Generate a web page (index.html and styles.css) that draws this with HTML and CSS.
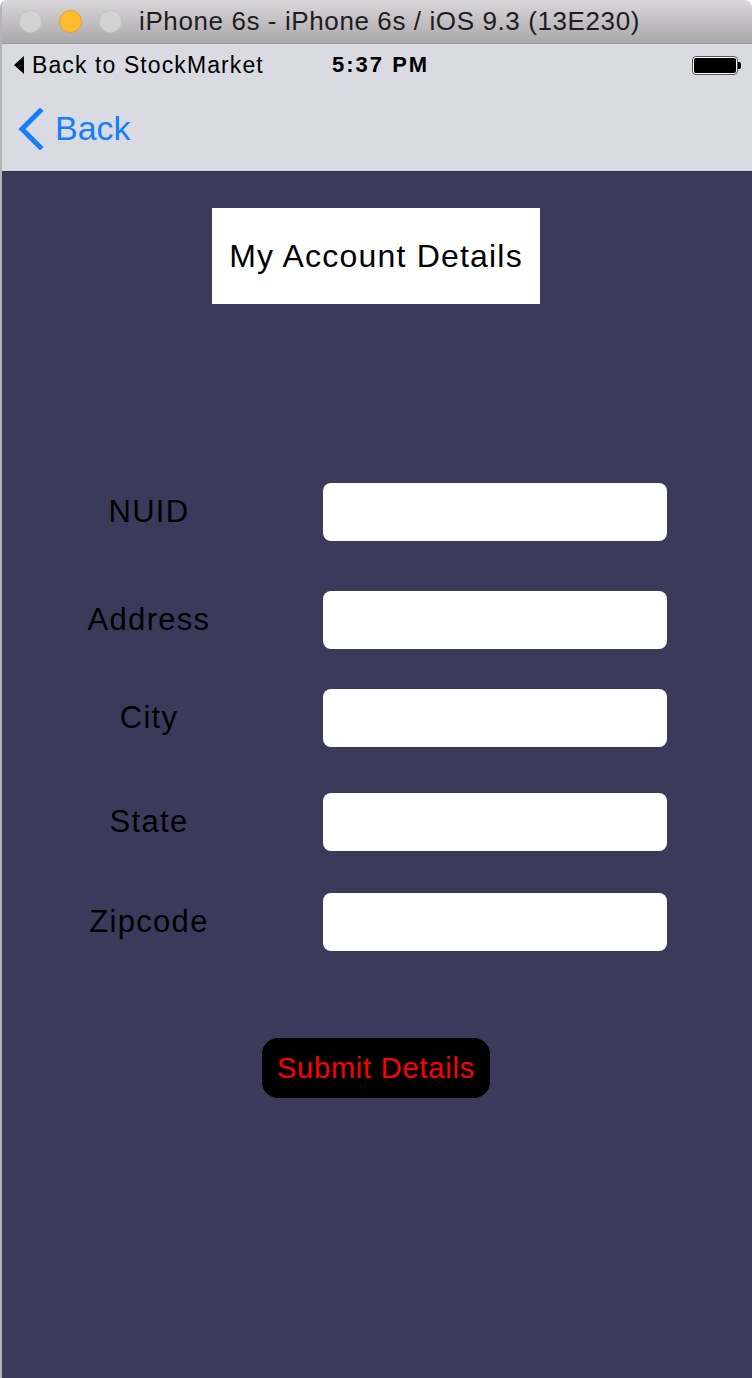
FILE: index.html
```html
<!DOCTYPE html>
<html>
<head>
<meta charset="utf-8">
<link rel="stylesheet" href="styles.css">
</head>
<body>
<div class="window">
  <div class="titlebar">
    <div class="lights">
      <span class="light gray"></span>
      <span class="light yellow"></span>
      <span class="light gray"></span>
    </div>
    <div class="title">iPhone 6s - iPhone 6s / iOS 9.3 (13E230)</div>
  </div>
  <div class="phone">
    <div class="statusbar">
      <div class="back-app">
        <svg class="tri" width="10" height="18" viewBox="0 0 10 18"><path d="M10 0 L0 9 L10 18 Z" fill="#000"/></svg>
        <span>Back to StockMarket</span>
      </div>
      <div class="time">5:37 PM</div>
      <div class="battery">
        <div class="batt-body"><div class="batt-fill"></div></div>
        <div class="batt-tip"></div>
      </div>
    </div>
    <div class="navbar">
      <svg class="chevron" width="28" height="42" viewBox="0 0 28 42"><path d="M24 3 L6 21 L24 39" fill="none" stroke="#157efb" stroke-width="5" stroke-linecap="square"/></svg>
      <span class="nav-back">Back</span>
    </div>
    <div class="content">
      <div class="heading">My Account Details</div>
      <div class="form">
        <div class="row"><div class="label">NUID</div><div class="field"></div></div>
        <div class="row"><div class="label">Address</div><div class="field"></div></div>
        <div class="row"><div class="label">City</div><div class="field"></div></div>
        <div class="row"><div class="label">State</div><div class="field"></div></div>
        <div class="row"><div class="label">Zipcode</div><div class="field"></div></div>
      </div>
      <div class="submit-wrap"><div class="submit">Submit Details</div></div>
    </div>
  </div>
</div>
</body>
</html>
```
FILE: styles.css
```css
html, body {
  margin: 0;
  padding: 0;
  background: #ffffff;
}
body {
  width: 752px;
  height: 1378px;
  overflow: hidden;
  font-family: "Liberation Sans", Arial, sans-serif;
}
.window {
  width: 752px;
  height: 1378px;
  display: flex;
  flex-direction: column;
  border-left: 2px solid #b4b4b6;
  box-sizing: border-box;
  border-top-left-radius: 8px;
  border-top-right-radius: 8px;
  overflow: hidden;
}
.titlebar {
  height: 44px;
  flex: none;
  display: flex;
  align-items: center;
  background: linear-gradient(#d9d7d9, #aaa8aa);
  border-bottom: 1px solid #9a989a;
  box-sizing: border-box;
}
.lights {
  display: flex;
  gap: 17px;
  margin-left: 17px;
}
.light {
  width: 23px;
  height: 23px;
  border-radius: 50%;
  box-sizing: border-box;
}
.light.gray {
  background: #d3d3d3;
  border: 1px solid #c4c4c4;
}
.light.yellow {
  background: #febd2f;
  border: 1px solid #e0a12a;
}
.title {
  margin-left: 17px;
  font-size: 26px;
  color: #1e1e1e;
  letter-spacing: 0.6px;
}
.phone {
  flex: 1;
  display: flex;
  flex-direction: column;
}
.statusbar {
  height: 42px;
  flex: none;
  background: #dadae2;
  display: flex;
  align-items: center;
  position: relative;
}
.back-app {
  display: flex;
  align-items: center;
  margin-left: 12px;
  font-size: 23px;
  letter-spacing: 1.1px;
  color: #000;
  gap: 8px;
}
.time {
  position: absolute;
  left: 330px;
  top: 8px;
  font-size: 22px;
  font-weight: bold;
  letter-spacing: 2px;
  color: #000;
}
.battery {
  margin-left: auto;
  margin-right: 11px;
  display: flex;
  align-items: center;
}
.batt-body {
  width: 46px;
  height: 19px;
  border: 1px solid #555;
  border-radius: 4px;
  box-sizing: border-box;
  padding: 1px;
  background: #fff;
}
.batt-fill {
  width: 100%;
  height: 100%;
  background: #000;
  border-radius: 2px;
}
.batt-tip {
  width: 3px;
  height: 7px;
  background: #000;
  border-radius: 0 2px 2px 0;
}
.navbar {
  height: 86px;
  flex: none;
  background: #dadae2;
  border-bottom: 1px solid #2e2d46;
  box-sizing: border-box;
  display: flex;
  align-items: center;
  padding-left: 14px;
}
.nav-back {
  margin-left: 11px;
  font-size: 34px;
  color: #157efb;
}
.content {
  flex: 1;
  background: #3b3a5a;
  display: flex;
  flex-direction: column;
  align-items: center;
}
.heading {
  margin-top: 36px;
  width: 328px;
  height: 96px;
  background: #fff;
  display: flex;
  align-items: center;
  justify-content: center;
  font-size: 32px;
  letter-spacing: 1.2px;
  color: #000;
  margin-left: -2px;
}
.form {
  margin-top: 179px;
  width: 100%;
  display: flex;
  flex-direction: column;
}
.row {
  display: grid;
  grid-template-columns: 294px 344px;
  column-gap: 27px;
  align-items: center;
}
.row:nth-child(2) { margin-top: 50px; }
.row:nth-child(3) { margin-top: 40px; }
.row:nth-child(4) { margin-top: 46px; }
.row:nth-child(5) { margin-top: 42px; }
.label {
  text-align: center;
  font-size: 31px;
  letter-spacing: 1.3px;
  color: #000;
}
.field {
  height: 58px;
  background: #fff;
  border-radius: 8px;
}
.submit-wrap {
  margin-top: 87px;
  display: flex;
  justify-content: center;
  margin-left: -2px;
}
.submit {
  width: 228px;
  height: 60px;
  border-radius: 16px;
  background: #000;
  color: #ff0000;
  font-size: 29px;
  letter-spacing: 0.8px;
  display: flex;
  align-items: center;
  justify-content: center;
}
```
